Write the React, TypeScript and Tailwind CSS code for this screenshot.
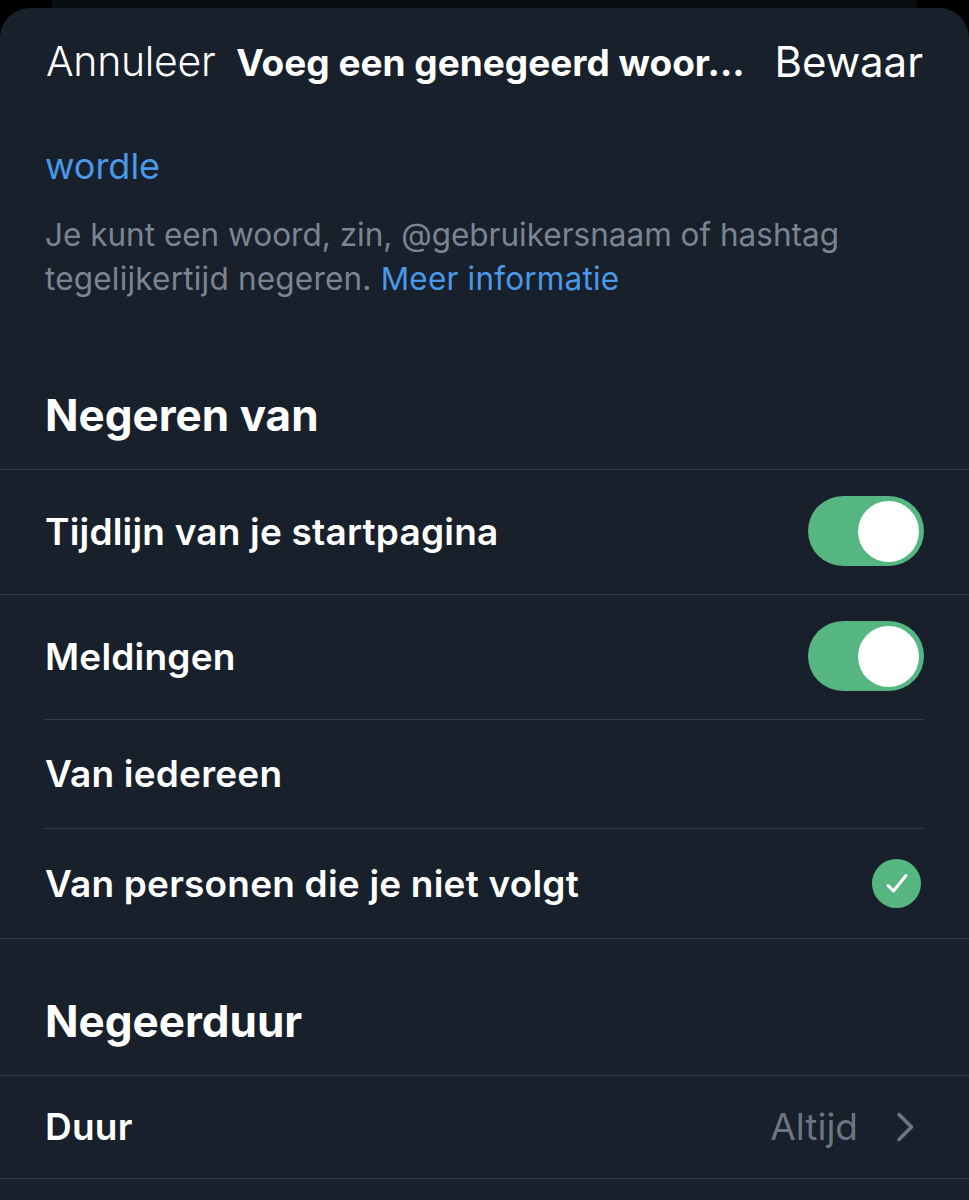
const Toggle = () => (
  <div className="w-[116px] h-[70px] rounded-full bg-[#56b681] flex items-center justify-end pr-[5px] mr-[-1px] mb-[2px]">
    <div className="w-[61px] h-[61px] rounded-full bg-white"></div>
  </div>
);

const Row = ({ label, heightClass, inset, children }: { label: string; heightClass: string; inset?: boolean; children?: React.ReactNode }) => (
  <div className={inset ? 'pl-[44px] pr-[46px]' : ''}>
    <div className={`${heightClass} flex items-center justify-between border-b border-[#363d48] ${inset ? 'pl-[1px]' : 'pl-[45px] pr-[46px]'}`}>
      <span className="text-[37px] font-semibold text-white tracking-[0.2px]">{label}</span>
      {children}
    </div>
  </div>
);

const SectionTitle = ({ title, heightClass }: { title: string; heightClass: string }) => (
  <div className={`${heightClass} flex items-end pl-[45px] pr-[46px] border-b border-[#363d48] pb-[28px]`}>
    <h2 className="text-[44px] leading-[52px] font-bold text-white">{title}</h2>
  </div>
);

export default function App() {
  return (
    <div className="w-[969px] h-[1200px] overflow-hidden bg-black font-['Inter',sans-serif]">
      <div className="h-[8px] mx-[52px] bg-[#0a0d12]"></div>
      <div className="h-[1192px] rounded-t-[30px] bg-[#18202b]">
        <div className="h-[110px] pl-[46px] pr-[46px] flex items-center justify-between text-white">
          <span className="text-[41px] font-light tracking-[-0.3px] mb-[2px]">Annuleer</span>
          <span className="text-[37px] font-bold mr-[9px]">Voeg een genegeerd woor...</span>
          <span className="text-[42px] font-normal mb-[4px]">Bewaar</span>
        </div>
        <div className="pl-[45px] pr-[46px] pt-[26px]">
          <p className="text-[36px] leading-[44px] text-[#4a99e9]">wordle</p>
          <p className="mt-[25px] text-[31.5px] leading-[44px] text-[#7a8591]">
            Je kunt een woord, zin, @gebruikersnaam of hashtag<br />
            <span className="tracking-[0.2px]">tegelijkertijd negeren. <span className="text-[#4a99e9]">Meer informatie</span></span>
          </p>
        </div>
        <SectionTitle title="Negeren van" heightClass="h-[169px]" />
        <Row label="Tijdlijn van je startpagina" heightClass="h-[125px]"><Toggle /></Row>
        <Row label="Meldingen" heightClass="h-[125px]" inset><Toggle /></Row>
        <Row label="Van iedereen" heightClass="h-[109px]" inset />
        <Row label="Van personen die je niet volgt" heightClass="h-[110px]">
          <div className="w-[49px] h-[49px] rounded-full bg-[#56b681] flex items-center justify-center mr-[2px]">
            <svg width="24" height="24" viewBox="0 0 24 24" fill="none" stroke="white" strokeWidth="3" strokeLinecap="round" strokeLinejoin="round">
              <path d="M3 13.5l5.5 5.5L21 3.5" />
            </svg>
          </div>
        </Row>
        <SectionTitle title="Negeerduur" heightClass="h-[137px]" />
        <Row label="Duur" heightClass="h-[103px]">
          <div className="flex items-center gap-[38px] text-[#6c7682]">
            <span className="text-[37px]">Altijd</span>
            <svg width="18" height="30" viewBox="0 0 18 30" fill="none" stroke="currentColor" strokeWidth="3.6" strokeLinecap="round" strokeLinejoin="round" className="mr-[9px]">
              <path d="M3 2.5l12.5 12.5L3 27.5" />
            </svg>
          </div>
        </Row>
      </div>
    </div>
  );
}
